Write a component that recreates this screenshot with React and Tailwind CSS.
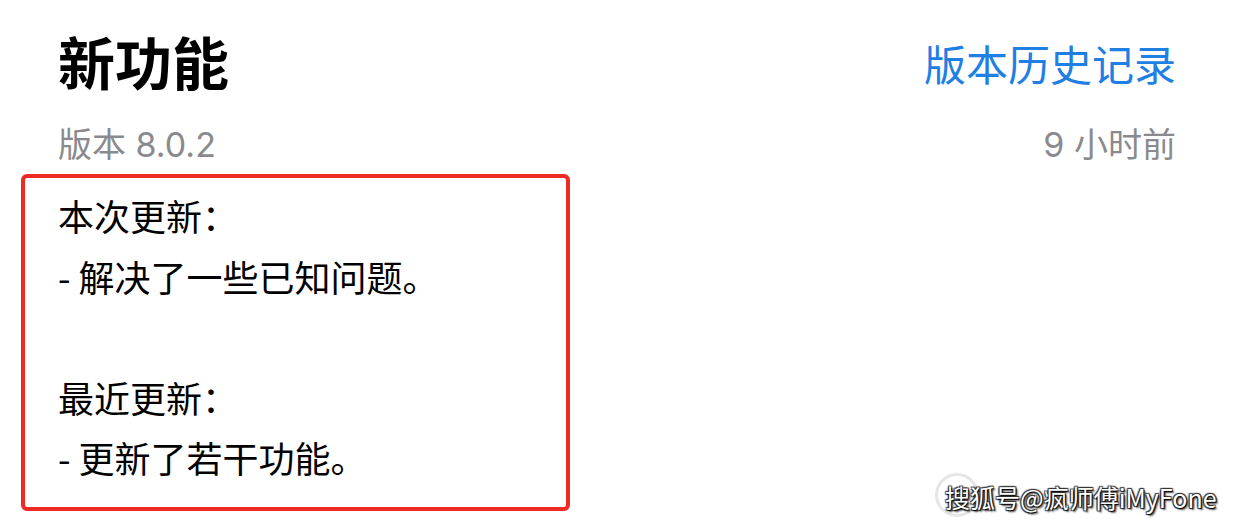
import React from "react";

export default function App() {
  const font = { fontFamily: '"Noto Sans CJK SC", "Noto Sans", sans-serif' };
  const latin = { fontFamily: 'Inter, "Noto Sans CJK SC", sans-serif' };
  return (
    <div
      className="relative w-[1238px] h-[530px] overflow-hidden bg-white text-black"
      style={font}
    >
      <div className="pl-[58px] pr-[62px] pt-[22px]">
        <div className="flex items-center justify-between h-[76px]">
          <div className="text-[57px] font-bold leading-none">新功能</div>
          <div className="text-[42px] leading-none text-[#1f7fe3] pt-[6px]">版本历史记录</div>
        </div>
        <div
          className="mt-[30px] flex items-center justify-between text-[34px] leading-none text-[#8a8a8e]"
          style={latin}
        >
          <span>版本 8.0.2</span>
          <span>9 小时前</span>
        </div>
      </div>
      <div className="ml-[21px] mt-[12px] w-[549px] h-[337px] rounded-[6px] border-4 border-[#ee2a22] pl-[33px] pt-[7px] text-[36px] leading-[60.5px]">
        <div>本次更新：</div>
        <div>- 解决了一些已知问题。</div>
        <div>&nbsp;</div>
        <div>最近更新：</div>
        <div>- 更新了若干功能。</div>
      </div>
      <div className="absolute left-[935px] top-[473px] w-[44px] h-[44px] rounded-full border-[3px] border-[#e6e6e6]"></div>
      <div className="absolute left-[945px] top-[485px] text-[25px] leading-none text-white [text-shadow:1px_1px_1px_#000,-1px_-1px_1px_#333,1px_-1px_1px_#333,-1px_1px_1px_#333,2px_2px_2px_#555]">
        搜狐号@疯师傅iMyFone
      </div>
    </div>
  );
}
